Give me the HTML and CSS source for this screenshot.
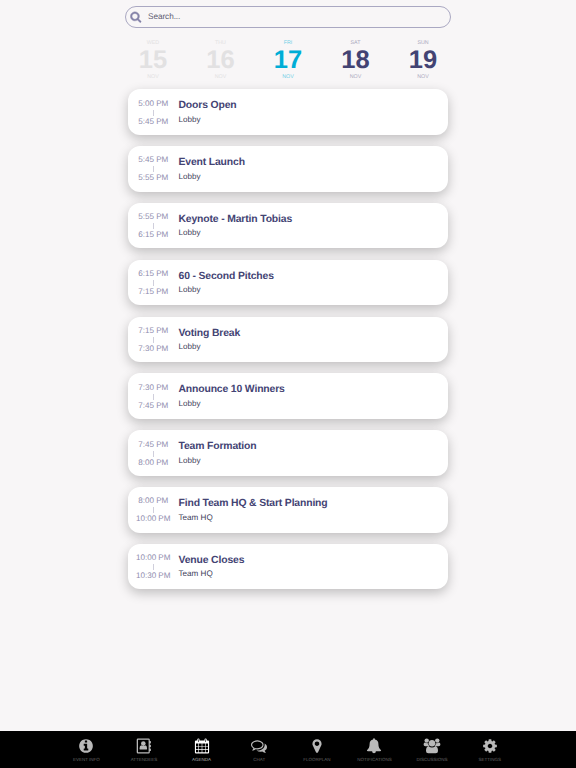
FILE: index.html
```html
<!DOCTYPE html>
<html lang="en">

<head>
	<meta charset="utf-8">
	<title>Agenda</title>
	<link rel="stylesheet" href="styles.css">
</head>

<body>
	<main>
		<label class="search">
			<svg viewBox="0 0 1792 1792"><path d="M1216 832q0-185-131.500-316.500t-316.500-131.500-316.500 131.500-131.500 316.500 131.500 316.500 316.500 131.500 316.500-131.500 131.500-316.500zm512 832q0 52-38 90t-90 38q-54 0-90-38l-343-342q-179 124-399 124-143 0-273.500-55.500t-225-150-150-225-55.500-273.500 55.500-273.500 150-225 225-150 273.500-55.500 273.500 55.500 225 150 150 225 55.500 273.500q0 220-124 399l343 343q37 37 37 90z"/></svg>
			<input type="text" placeholder="Search...">
		</label>

		<nav class="days">
			<div class="day past"><small>WED</small><b>15</b><small>NOV</small></div>
			<div class="day past"><small>THU</small><b>16</b><small>NOV</small></div>
			<div class="day current"><small>FRI</small><b>17</b><small>NOV</small></div>
			<div class="day"><small>SAT</small><b>18</b><small>NOV</small></div>
			<div class="day"><small>SUN</small><b>19</b><small>NOV</small></div>
		</nav>

		<section class="agenda">
			<article class="card">
				<div class="time"><span>5:00 PM</span><i></i><span>5:45 PM</span></div>
				<div class="info"><h2>Doors Open</h2><p>Lobby</p></div>
			</article>
			<article class="card">
				<div class="time"><span>5:45 PM</span><i></i><span>5:55 PM</span></div>
				<div class="info"><h2>Event Launch</h2><p>Lobby</p></div>
			</article>
			<article class="card">
				<div class="time"><span>5:55 PM</span><i></i><span>6:15 PM</span></div>
				<div class="info"><h2>Keynote - Martin Tobias</h2><p>Lobby</p></div>
			</article>
			<article class="card">
				<div class="time"><span>6:15 PM</span><i></i><span>7:15 PM</span></div>
				<div class="info"><h2>60 - Second Pitches</h2><p>Lobby</p></div>
			</article>
			<article class="card">
				<div class="time"><span>7:15 PM</span><i></i><span>7:30 PM</span></div>
				<div class="info"><h2>Voting Break</h2><p>Lobby</p></div>
			</article>
			<article class="card">
				<div class="time"><span>7:30 PM</span><i></i><span>7:45 PM</span></div>
				<div class="info"><h2>Announce 10 Winners</h2><p>Lobby</p></div>
			</article>
			<article class="card">
				<div class="time"><span>7:45 PM</span><i></i><span>8:00 PM</span></div>
				<div class="info"><h2>Team Formation</h2><p>Lobby</p></div>
			</article>
			<article class="card">
				<div class="time"><span>8:00 PM</span><i></i><span>10:00 PM</span></div>
				<div class="info"><h2>Find Team HQ &amp; Start Planning</h2><p>Team HQ</p></div>
			</article>
			<article class="card">
				<div class="time"><span>10:00 PM</span><i></i><span>10:30 PM</span></div>
				<div class="info"><h2>Venue Closes</h2><p>Team HQ</p></div>
			</article>
		</section>
	</main>

	<footer class="tabs">
		<a class="tab">
			<svg viewBox="0 0 1792 1792"><path d="M1152 1376v-160q0-14-9-23t-23-9h-96v-512q0-14-9-23t-23-9h-320q-14 0-23 9t-9 23v160q0 14 9 23t23 9h96v320h-96q-14 0-23 9t-9 23v160q0 14 9 23t23 9h448q14 0 23-9t9-23zm-128-896v-160q0-14-9-23t-23-9h-192q-14 0-23 9t-9 23v160q0 14 9 23t23 9h192q14 0 23-9t9-23zm640 416q0 209-103 385.500t-279.500 279.500-385.500 103-385.500-103-279.500-279.500-103-385.500 103-385.500 279.500-279.500 385.500-103 385.500 103 279.500 279.500 103 385.500z"/></svg>
			<span>EVENT INFO</span>
		</a>
		<a class="tab">
			<svg viewBox="0 0 16 16"><path fill-rule="evenodd" d="M2 .5h10.500a1.300 1.300 0 0 1 1.300 1.300v1.200h.7q.4 0 .4.400v1.700q0 .4-.4.400h-.7v1.300h.7q.4 0 .4.400v1.700q0 .4-.4.400h-.7v1.300h.7q.4 0 .4.400v1.700q0 .4-.4.400h-.7v1.100a1.300 1.300 0 0 1-1.300 1.300H2A1.300 1.300 0 0 1 .7 14.200V1.800A1.300 1.300 0 0 1 2 .5zM2 1.700v12.600h10.600V1.700z"/><circle cx="7.300" cy="5.600" r="2.300"/><path d="M5.300 7.200q2 1.700 4 0 1.800.5 1.800 3.200 0 1.200-1 1.200H4.500q-1 0-1-1.200 0-2.700 1.800-3.200z"/></svg>
			<span>ATTENDEES</span>
		</a>
		<a class="tab active">
			<svg viewBox="0 0 16 16"><path fill-rule="evenodd" d="M2 2.500h1.300V1.600q0-1.100 1.100-1.100t1.100 1.100v.9h5V1.600q0-1.100 1.100-1.100t1.100 1.100v.9H14q1.100 0 1.100 1.100v10.800q0 1.100-1.100 1.100H2q-1.100 0-1.100-1.100V3.600Q.9 2.500 2 2.500zM4.100 1.600v2.200q0 .3.300.3t.3-.3V1.600q0-.3-.3-.3t-.3.3zM11.300 1.600v2.200q0 .3.300.3t.3-.3V1.600q0-.3-.3-.3t-.3.300zM2 5.600v2.300h2.400V5.600zM5 5.600v2.300h2.700V5.600zM8.300 5.600v2.300H11V5.600zM11.600 5.600v2.300H14V5.600zM2 8.500v2.600h2.400V8.500zM5 8.500v2.600h2.700V8.500zM8.300 8.500v2.600H11V8.500zM11.600 8.500v2.600H14V8.500zM2 11.700v2.600h2.400v-2.600zM5 11.700v2.600h2.700v-2.600zM8.300 11.700v2.600H11v-2.600zM11.600 11.700v2.600H14v-2.600z"/></svg>
			<span>AGENDA</span>
		</a>
		<a class="tab">
			<svg viewBox="0 0 1792 1792"><path d="M704 384q-153 0-286 52t-211.500 141-78.500 191q0 82 53 158t149 132l97 56-35 84q34-20 62-39l44-31 53 10q78 14 153 14 153 0 286-52t211.500-141 78.500-191-78.500-191-211.500-141-286-52zm0-128q191 0 353.500 68.500t256.500 186.500 94 257-94 257-256.500 186.500-353.500 68.500q-86 0-176-16-124 88-278 128-36 9-86 16h-3q-11 0-20.500-8t-11.500-21q-1-3-1-6.500t.5-6.500 2-6l2.500-5 3.500-5.500 4-5 4.500-5 4-4.500q5-6 23-25t26-29.500 22.500-29 25-38.500 20.500-44q-124-72-195-177t-71-224q0-139 94-257t256.500-186.500 353.500-68.500zm822 1169q10 24 20.500 44t25 38.500 22.500 29 26 29.500 23 25q1 1 4 4.500t4.500 5 4 5 3.500 5.500l2.500 5 2 6 .5 6.500-1 6.500q-3 14-13 22t-22 7q-50-7-86-16-154-40-278-128-90 16-176 16-271 0-472-132 58 4 88 4 161 0 309-45t264-129q125-92 192-212t67-254q0-77-23-152 129 71 204 178t75 230q0 120-71 224.500t-195 176.500z"/></svg>
			<span>CHAT</span>
		</a>
		<a class="tab">
			<svg viewBox="0 0 1792 1792"><path d="M1152 640q0-106-75-181t-181-75-181 75-75 181 75 181 181 75 181-75 75-181zm256 0q0 109-33 179l-364 774q-16 33-47.500 52t-67.500 19-67.500-19-46.500-52l-365-774q-33-70-33-179 0-212 150-362t362-150 362 150 150 362z"/></svg>
			<span>FLOORPLAN</span>
		</a>
		<a class="tab">
			<svg viewBox="0 0 16 16"><path d="M8 .2q.9 0 .9.900v.500q3.500.8 3.500 4.500 0 4.300 2.700 6.100 0 1.100-1.100 1.100H9.900a1.900 1.900 0 0 1-3.800 0H2q-1.100 0-1.100-1.100 2.700-1.800 2.700-6.100 0-3.700 3.500-4.500v-.5Q7.100.2 8 .2z"/></svg>
			<span>NOTIFICATIONS</span>
		</a>
		<a class="tab">
			<svg class="wide" viewBox="0 0 18 16"><circle cx="3.700" cy="2.600" r="2.200"/><circle cx="14.300" cy="2.600" r="2.200"/><circle cx="9" cy="5.200" r="3.200"/><path d="M2 4.500q1.700 1.100 3.300.5-.2 2 1 3.200H2.400Q.6 8.200.6 6.800q0-2.200 1.400-2.300zM16 4.500q-1.700 1.100-3.300.5.2 2-1 3.200h3.900q1.800 0 1.800-1.400 0-2.200-1.400-2.300zM5.600 8.200Q9 10.700 12.400 8.200q2.600.3 2.600 4.800 0 2.300-2.300 2.300H5.300Q3 15.300 3 13q0-4.500 2.600-4.800z"/></svg>
			<span>DISCUSSIONS</span>
		</a>
		<a class="tab">
			<svg viewBox="0 0 1792 1792"><path d="M1152 896q0-106-75-181t-181-75-181 75-75 181 75 181 181 75 181-75 75-181zm512-109v222q0 12-8 23t-20 13l-185 28q-19 54-39 91 35 50 107 138 10 12 10 25t-9 23q-27 37-99 108t-94 71q-12 0-26-9l-138-108q-44 23-91 38-16 136-29 186-7 28-36 28h-222q-14 0-24.500-8.500t-11.500-21.500l-28-184q-49-16-90-37l-141 107q-10 9-25 9-14 0-25-11-126-114-165-168-7-10-7-23 0-12 8-23 15-21 51-66.500t54-70.500q-27-50-41-99l-183-27q-13-2-21-12.500t-8-23.500v-222q0-12 8-23t19-13l186-28q14-46 39-92-40-57-107-138-10-12-10-24 0-10 9-23 26-36 98.500-107.500t94.500-71.500q13 0 26 10l138 107q44-23 91-38 16-136 29-186 7-28 36-28h222q14 0 24.500 8.500t11.500 21.500l28 184q49 16 90 37l142-107q9-9 24-9 13 0 25 10 129 119 165 170 7 8 7 22 0 12-8 23-15 21-51 66.500t-54 70.500q26 50 41 98l183 28q13 2 21 12.500t8 23.500z"/></svg>
			<span>SETTINGS</span>
		</a>
	</footer>
</body>

</html>
```
FILE: styles.css
```css
* {
	box-sizing: border-box;
}

:root {
	--navy: #434373;
	--lavender: #8f8dae;
	--cyan: #00add6;
}

body {
	display: flex;
	flex-direction: column;
	height: 100vh;
	margin: 0;
	overflow: hidden;
	background-color: #f8f6f7;
	font-family: "Liberation Sans", Arial, sans-serif;
	text-rendering: geometricPrecision;
}

main {
	flex: 1;
	padding-top: 6px;
}

.search {
	display: flex;
	align-items: center;
	width: 326px;
	height: 21.5px;
	margin: 0 auto;
	padding-left: 4px;
	border: 1px solid #aaa8c2;
	border-radius: 11px;
}

.search svg {
	width: 11.5px;
	height: 11.5px;
	margin-right: 6.5px;
	fill: #8583a9;
	stroke: #8583a9;
	stroke-width: 60;
}

.search input {
	flex: 1;
	padding: 0;
	border: none;
	outline: none;
	background: none;
	font: 8.2px "Liberation Sans", Arial, sans-serif;
	letter-spacing: -0.05px;
	text-rendering: inherit;
}

.search input::placeholder {
	color: #5d5b70;
}

.days {
	display: flex;
	width: 337.5px;
	margin: 12px auto 0;
}

.day {
	display: flex;
	flex: 1;
	flex-direction: column;
	align-items: center;
	color: var(--navy);
}

.day small {
	font-size: 5.3px;
	line-height: 6px;
	color: #aba9be;
}

.day b {
	padding-top: 1px;
	font-size: 25.5px;
	line-height: 27px;
}

.day.past,
.day.past small {
	color: #e2e1e2;
}

.day.current {
	color: var(--cyan);
}

.day.current small {
	color: #70d0e6;
}

.agenda {
	display: flex;
	flex-direction: column;
	gap: 11.35px;
	width: 320px;
	margin: 9.7px auto 0;
}

.card {
	display: flex;
	height: 45.5px;
	border-radius: 12px;
	background-color: white;
	box-shadow: 0 4px 12px rgba(0, 0, 0, 0.23);
}

.time {
	display: flex;
	flex-direction: column;
	align-items: center;
	width: 50.5px;
	padding-top: 9.4px;
	font-size: 8.1px;
	letter-spacing: -0.03px;
	line-height: 10px;
	color: var(--lavender);
}

.time i {
	width: 1px;
	height: 6px;
	margin: 1px 0;
	background-color: #d0cfdc;
}

.info h2 {
	margin: 10px 0 0;
	font-size: 10.4px;
	letter-spacing: -0.15px;
	line-height: 13px;
	color: var(--navy);
}

.info p {
	margin: 2.5px 0 0;
	font-size: 8.1px;
	line-height: 10px;
	color: #41405a;
}

.tabs {
	display: flex;
	height: 37px;
	padding: 6.5px 10% 0;
	background-color: black;
}

.tab {
	display: flex;
	flex: 1;
	flex-direction: column;
	align-items: center;
	gap: 3.5px;
	font-size: 4.5px;
	line-height: 6px;
	color: #646464;
}

.tab svg {
	width: 16px;
	height: 16px;
	fill: #b9b9b9;
}

.tab svg.wide {
	width: 18px;
}

.tab.active {
	color: #b0b0b0;
}

.tab.active svg {
	fill: white;
}
```
